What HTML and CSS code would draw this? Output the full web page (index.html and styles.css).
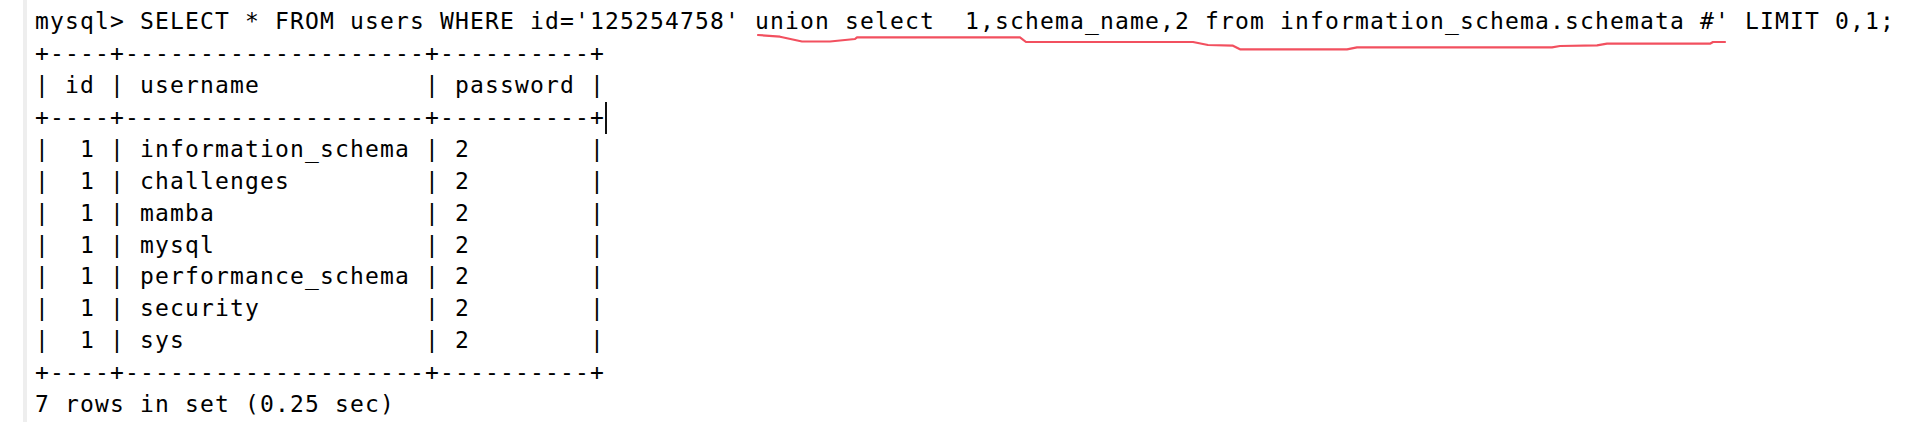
FILE: index.html
```html
<!DOCTYPE html>
<html>
<head>
<meta charset="utf-8">
<link rel="stylesheet" href="styles.css">
</head>
<body>
<div class="term">
  <div class="gutter"></div>
  <div class="screen">
<pre class="out">mysql&gt; SELECT * FROM users WHERE id='125254758' union select  1,schema_name,2 from information_schema.schemata #' LIMIT 0,1;
+----+--------------------+----------+
| id | username           | password |
+----+--------------------+----------+<span class="caret"></span>
|  1 | information_schema | 2        |
|  1 | challenges         | 2        |
|  1 | mamba              | 2        |
|  1 | mysql              | 2        |
|  1 | performance_schema | 2        |
|  1 | security           | 2        |
|  1 | sys                | 2        |
+----+--------------------+----------+
7 rows in set (0.25 sec)</pre>
    <svg class="mark" width="1918" height="60" viewBox="0 0 1918 60" xmlns="http://www.w3.org/2000/svg">
      <polyline fill="none" stroke="#f2505f" stroke-width="2.2" stroke-linejoin="round" stroke-linecap="round"
        points="758,35 780,36.7 802,41.5 830,41.5 855,39 857,37.3 1020,37.3 1026,42 1193,42 1208,45 1233,45.7 1240,49.3 1347,49.3 1357,47.3 1552,47.3 1560,46 1597,45.3 1607,43.7 1710,43.7 1713,42 1725,42"/>
    </svg>
  </div>
</div>
</body>
</html>
```
FILE: styles.css
```css
html, body {
  margin: 0;
  padding: 0;
  background: #ffffff;
}

.term {
  display: flex;
  height: 422px;
  overflow: hidden;
}

.gutter {
  margin-left: 23px;
  width: 4px;
  background: #eeeeee;
  flex: none;
}

.screen {
  flex: 1;
}

.out {
  margin: 0;
  padding: 6.1px 0 0 8px;
  font-family: "DejaVu Sans Mono", "Liberation Mono", monospace;
  font-size: 23px;
  letter-spacing: 1.153px;
  line-height: 31.9px;
  color: #000000;
  white-space: pre;
}

.caret {
  display: inline-block;
  width: 2px;
  height: 32px;
  background: #111111;
  vertical-align: top;
}

.mark {
  position: absolute;
  top: 0;
  left: 0;
  pointer-events: none;
}
```
